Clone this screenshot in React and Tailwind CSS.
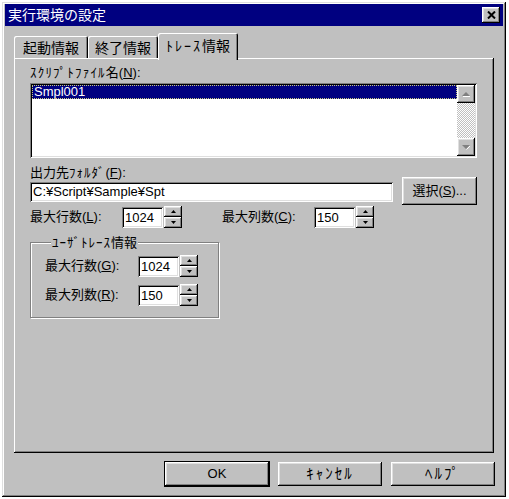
const raised =
  "bg-[#c0c0c0] shadow-[inset_-1px_-1px_0_#000,inset_1px_1px_0_#fff,inset_-2px_-2px_0_#808080,inset_2px_2px_0_#dfdfdf]";
const sunken =
  "bg-white shadow-[inset_1px_1px_0_#808080,inset_-1px_-1px_0_#fff,inset_2px_2px_0_#000,inset_-2px_-2px_0_#dfdfdf]";

function Tri({ down, color = "#000", w = 5, h = 3 }) {
  const d = down ? `M0 0 L${w} 0 L${w / 2} ${h}Z` : `M${w / 2} 0 L${w} ${h} L0 ${h}Z`;
  return (
    <svg width={w} height={h} className="block">
      <path d={d} fill={color} />
    </svg>
  );
}

function Spin() {
  return (
    <div className="flex flex-col w-[18px] h-[22px] ml-px">
      <div className={`flex-1 flex items-center justify-center ${raised}`}>
        <Tri />
      </div>
      <div className={`flex-1 flex items-center justify-center ${raised}`}>
        <Tri down />
      </div>
    </div>
  );
}

function NumField({ value }) {
  return (
    <div className="flex items-center">
      <div className={`w-[41px] h-[21px] ${sunken} pl-[3px] leading-[21px] text-[13px]`}>{value}</div>
      <Spin />
    </div>
  );
}

function Tab({ children, active, w }) {
  if (active) {
    return (
      <div
        className={`${w} h-[27px] -mb-[2px] relative z-10 bg-[#c0c0c0] rounded-t-[2px] shadow-[inset_1px_1px_0_#fff,inset_-1px_0_0_#000,inset_-2px_0_0_#808080] flex items-start justify-center pt-[3px] text-[14px]`}
      >
        {children}
      </div>
    );
  }
  return (
    <div
      className={`${w} h-[22px] bg-[#c0c0c0] rounded-t-[2px] shadow-[inset_1px_1px_0_#fff,inset_-1px_0_0_#000,inset_-2px_0_0_#808080] flex items-start justify-center pt-[2px] text-[14px]`}
    >
      {children}
    </div>
  );
}

function Btn({ children, def }) {
  return (
    <div
      className={`w-[104px] h-[24px] flex items-center justify-center text-[13px] ${raised} ${
        def ? "outline outline-1 outline-black" : ""
      }`}
    >
      {children}
    </div>
  );
}

export default function App() {
  return (
    <div className="w-[509px] h-[499px] bg-white pt-[2px] pl-[2px] font-['Liberation_Sans','Noto_Sans_CJK_JP',sans-serif] text-[13px] text-black overflow-hidden">
      <div className="w-[504px] h-[495px] bg-[#c0c0c0] px-[3px] pt-[2px] shadow-[inset_-1px_-1px_0_#000,inset_1px_1px_0_#dfdfdf,inset_-2px_-2px_0_#808080,inset_2px_2px_0_#fff]">
        {/* title bar */}
        <div className="h-[22px] bg-[#000080] flex items-center justify-between pl-[3px] pr-[3px]">
          <span className="text-white text-[14px] leading-none">実行環境の設定</span>
          <div className={`w-[18px] h-[16px] flex items-center justify-center ${raised}`}>
            <svg width="9" height="8" className="block">
              <path d="M1 0.5 L8 7.5 M8 0.5 L1 7.5" stroke="#000" strokeWidth="2" />
            </svg>
          </div>
        </div>

        <div className="ml-[9px] mr-[7px]">
          {/* tabs */}
          <div className="flex items-end h-[25px] mt-[7px]">
            <Tab w="w-[74px]">起動情報</Tab>
            <Tab w="w-[70px]">終了情報</Tab>
            <Tab w="w-[80px]" active>
              <span className="tracking-[2px]">ﾄﾚｰｽ</span>情報
            </Tab>
          </div>

          {/* panel */}
          <div className="w-[480px] h-[395px] bg-[#c0c0c0] shadow-[inset_-1px_-1px_0_#000,inset_1px_1px_0_#fff,inset_-2px_-2px_0_#808080] pl-[16px] pt-[7px]">
            <div className="h-[15px] leading-[15px]">
              <span className="tracking-[1.2px]">ｽｸﾘﾌﾟﾄﾌｧｲﾙ</span>名(<u>N</u>):
            </div>
            <div className={`mt-[3px] w-[447px] h-[75px] ${sunken} p-[2px] flex`}>
              <div className="flex-1">
                <div className="h-[14px] bg-[#000080] text-white leading-[14px] pl-[2px] outline outline-1 outline-dotted outline-[#c8c880] -outline-offset-1">
                  Smpl001
                </div>
              </div>
              <div className="w-[18px] flex flex-col bg-[repeating-conic-gradient(#c0c0c0_0_25%,#fff_0_50%)] bg-[length:2px_2px]">
                <div className={`h-[18px] flex items-center justify-center ${raised}`}>
                  <svg width="8" height="5" className="block">
                    <path d="M4 0 L8 4 L0 4Z" fill="#808080" />
                    <path d="M1 4.5 L8 4.5" stroke="#fff" strokeWidth="1" />
                  </svg>
                </div>
                <div className="flex-1" />
                <div className={`h-[18px] flex items-center justify-center ${raised}`}>
                  <svg width="8" height="5" className="block">
                    <path d="M0 0 L8 0 L4 4Z" fill="#808080" />
                    <path d="M4.5 4.5 L8 1" stroke="#fff" strokeWidth="1" />
                  </svg>
                </div>
              </div>
            </div>

            {/* output folder */}
            <div className="flex items-end mt-[7px]">
              <div className="w-[363px]">
                <div className="h-[15px] leading-[15px]">
                  出力先<span className="tracking-[1px]">ﾌｫﾙﾀﾞ</span>(<u>F</u>):
                </div>
                <div className={`mt-[2px] h-[20px] ${sunken} pl-[3px] leading-[20px]`}>C:¥Script¥Sample¥Spt</div>
              </div>
              <div className={`ml-[9px] -mb-[3px] w-[75px] h-[28px] flex items-center justify-center ${raised}`}>
                選択(<u>S</u>)...
              </div>
            </div>

            {/* max rows / cols */}
            <div className="flex items-center h-[22px] mt-[4px]">
              <div className="w-[92px]">
                最大行数(<u>L</u>):
              </div>
              <NumField value="1024" />
              <div className="w-[92px] ml-[40px]">
                最大列数(<u>C</u>):
              </div>
              <NumField value="150" />
            </div>

            {/* user trace group */}
            <fieldset className="mt-[7px] w-[189px] border border-[#808080] shadow-[1px_1px_0_#fff,inset_1px_1px_0_#fff] pl-[14px] pb-[11px]">
              <legend className="ml-[6px] px-[1px] leading-[15px] bg-[#c0c0c0] relative">
                <span className="tracking-[1px]">ﾕｰｻﾞﾄﾚｰｽ</span>情報
              </legend>
              <div className="flex items-center h-[22px] mt-[5px]">
                <div className="w-[93px]">
                  最大行数(<u>G</u>):
                </div>
                <NumField value="1024" />
              </div>
              <div className="flex items-center h-[22px] mt-[7px]">
                <div className="w-[93px]">
                  最大列数(<u>R</u>):
                </div>
                <NumField value="150" />
              </div>
            </fieldset>
          </div>

          {/* buttons */}
          <div className="flex justify-end gap-[9px] mt-[9px] pr-[1px]">
            <Btn def>OK</Btn>
            <Btn>
              <span className="text-[15px] tracking-[2px]">ｷｬﾝｾﾙ</span>
            </Btn>
            <Btn>
              <span className="text-[15px] tracking-[2px]">ﾍﾙﾌﾟ</span>
            </Btn>
          </div>
        </div>
      </div>
    </div>
  );
}
